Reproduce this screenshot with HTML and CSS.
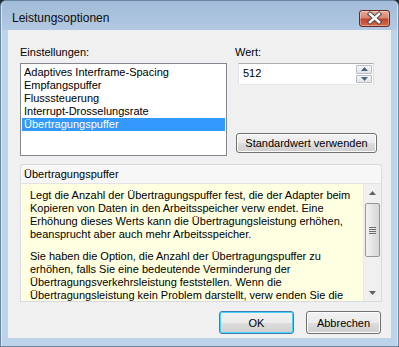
FILE: index.html
```html
<!DOCTYPE html>
<html>
<head>
<meta charset="utf-8">
<title>Leistungsoptionen</title>
<link rel="stylesheet" href="styles.css">
</head>
<body>
<div class="window">
  <div class="titlebar">
    <span class="title">Leistungsoptionen</span>
    <span class="close">
      <svg width="31" height="17" viewBox="0 0 31 17">
        <path d="M11 4 L20 12 M20 4 L11 12" stroke="#4a4a4a" stroke-width="4.4" stroke-linecap="square" fill="none"/>
        <path d="M11 4 L20 12 M20 4 L11 12" stroke="#ffffff" stroke-width="2.4" stroke-linecap="square" fill="none"/>
      </svg>
    </span>
  </div>

  <div class="client">
    <div class="settings">
      <div class="col-list">
        <div class="label">Einstellungen:</div>
        <ul class="listbox">
          <li>Adaptives Interframe-Spacing</li>
          <li>Empfangspuffer</li>
          <li>Flusssteuerung</li>
          <li>Interrupt-Drosselungsrate</li>
          <li class="selected">Übertragungspuffer</li>
        </ul>
      </div>
      <div class="col-value">
        <div class="label">Wert:</div>
        <div class="spin">
          <span class="spin-text">512</span>
          <span class="spin-buttons">
            <span class="spin-btn"><svg width="7" height="4" viewBox="0 0 7 4"><path d="M0 4 L3.5 0 L7 4 Z" fill="#4d6185"/></svg></span>
            <span class="spin-btn"><svg width="7" height="4" viewBox="0 0 7 4"><path d="M0 0 L3.5 4 L7 0 Z" fill="#4d6185"/></svg></span>
          </span>
        </div>
        <button class="btn btn-default-value">Standardwert verwenden</button>
      </div>
    </div>

    <div class="group">
      <div class="group-head">Übertragungspuffer</div>
      <div class="group-body">
        <div class="desc">
          <p>Legt die Anzahl der Übertragungspuffer fest, die der Adapter beim<br>
          Kopieren von Daten in den Arbeitsspeicher verw endet. Eine<br>
          Erhöhung dieses Werts kann die Übertragungsleistung erhöhen,<br>
          beansprucht aber auch mehr Arbeitsspeicher.</p>
          <p>Sie haben die Option, die Anzahl der Übertragungspuffer zu<br>
          erhöhen, falls Sie eine bedeutende Verminderung der<br>
          Übertragungsverkehrsleistung feststellen. Wenn die<br>
          Übertragungsleistung kein Problem darstellt, verw enden Sie die<br>
          Standardeinstellung.</p>
        </div>
        <div class="scrollbar">
          <span class="sb-arrow"><svg width="7" height="4" viewBox="0 0 7 4"><path d="M0 4 L3.5 0 L7 4 Z" fill="#606060"/></svg></span>
          <span class="sb-track">
            <span class="sb-thumb"><span class="grip"></span></span>
          </span>
          <span class="sb-arrow"><svg width="7" height="4" viewBox="0 0 7 4"><path d="M0 0 L3.5 4 L7 0 Z" fill="#606060"/></svg></span>
        </div>
      </div>
    </div>

    <div class="actions">
      <button class="btn btn-ok">OK</button>
      <button class="btn btn-cancel">Abbrechen</button>
    </div>
  </div>
</div>
</body>
</html>
```

FILE: styles.css
```css
/* Dialog "Leistungsoptionen", Windows 7 basic look
*/

body
{ margin: 0;
background: #1f2d36;
font-family: "Liberation Sans", Arial, sans-serif;
font-size: 11px;
color: #000;
}

div.window
{ width: 399px;
height: 347px;
box-sizing: border-box;
display: flex;
flex-direction: column;
padding: 0 7px 8px 7px;
border: 1px solid #6c87a4;
border-radius: 6px 6px 0 0;
background: linear-gradient(#a3bcd7 0, #b1c9e2 29px, #bcd3ea 29px);
box-shadow: inset 1px 0 #d9e6f3, inset -1px 0 #d9e6f3;
}

/* Title bar */

div.titlebar
{ height: 29px;
display: flex;
align-items: flex-start;
justify-content: space-between;
}

span.title
{ margin: 10px 0 0 4px;
font-size: 12px;
line-height: 15px;
color: #0c0c0c;
}

span.close
{ width: 31px;
height: 17px;
margin: 9px 1px 0 0;
box-sizing: border-box;
border: 1px solid #652a24;
border-radius: 3px;
background: linear-gradient(#e9a99a 0, #d98670 45%, #c3442c 55%, #d46a4c 100%);
box-shadow: inset 0 0 0 1px rgba(255,255,255,0.35);
display: flex;
align-items: center;
justify-content: center;
}

span.close svg
{ margin: -1px;
}

/* Client area */

div.client
{ flex: 1;
background: #f0f0f0;
padding: 16px 9px 0 12px;
display: flex;
flex-direction: column;
}

div.label
{ height: 13px;
line-height: 13px;
margin-bottom: 4px;
}

div.settings
{ display: flex;
gap: 8px;
}

div.col-list
{ width: 207px;
}

ul.listbox
{ margin: 0;
padding: 2px 1px;
list-style: none;
height: 93px;
box-sizing: border-box;
border: 1px solid #828790;
background: #fff;
}

ul.listbox li
{ height: 13px;
line-height: 13px;
padding-left: 2px;
white-space: nowrap;
}

ul.listbox li.selected
{ background: #3399ff;
color: #fff;
}

div.col-value
{ width: 142px;
display: flex;
flex-direction: column;
}

div.spin
{ width: 136px;
height: 22px;
margin-left: 3px;
box-sizing: border-box;
border: 1px solid #abadb3;
border-color: #abadb3 #dbdfe6 #e3e9ef #e2e3ea;
background: #fff;
display: flex;
justify-content: space-between;
}

span.spin-text
{ padding: 3px 0 0 4px;
line-height: 13px;
}

span.spin-buttons
{ width: 16px;
display: flex;
flex-direction: column;
gap: 1px;
padding: 1px 1px 1px 0;
}

span.spin-btn
{ flex: 1;
box-sizing: border-box;
border: 1px solid #b6bcc6;
border-radius: 1px;
background: linear-gradient(#f7f7f7, #e4e4e4);
display: flex;
align-items: center;
justify-content: center;
}

/* Buttons */

button.btn
{ font: inherit;
color: #000;
height: 23px;
padding: 0;
box-sizing: border-box;
border: 1px solid #707070;
border-radius: 3px;
background: linear-gradient(#f2f2f2 0, #ebebeb 50%, #dddddd 50%, #cfcfcf 100%);
box-shadow: inset 0 0 0 1px #fcfcfc;
}

button.btn-default-value
{ width: 141px;
height: 20px;
margin: 48px 0 0 1px;
}

/* Description group */

div.group
{ width: 362px;
margin-top: 8px;
}

div.group-head
{ height: 19px;
box-sizing: border-box;
border: 1px solid #d5dbe1;
border-bottom: none;
border-radius: 3px 3px 0 0;
background: #f7f7f7;
padding-left: 3px;
line-height: 19px;
}

div.group-body
{ height: 119px;
box-sizing: border-box;
border: 1px solid #d5dbe1;
border-top: 1px solid #e3e3e3;
background: #ffffe1;
display: flex;
overflow: hidden;
}

div.desc
{ flex: 1;
padding: 5px 0 0 9px;
font-family: "Liberation Sans", Arial, sans-serif;
font-size: 11px;
line-height: 13px;
white-space: nowrap;
overflow: hidden;
}

div.desc p
{ margin: 0 0 9px 0;
}

div.scrollbar
{ width: 17px;
background: #f0f0f0;
border-left: 1px solid #e8e8e8;
display: flex;
flex-direction: column;
}

span.sb-arrow
{ height: 17px;
display: flex;
align-items: center;
justify-content: center;
}

span.sb-track
{ flex: 1;
padding-top: 2px;
}

span.sb-thumb
{ display: flex;
align-items: center;
justify-content: center;
height: 54px;
margin: 0 1px;
box-sizing: border-box;
border: 1px solid #979797;
border-radius: 2px;
background: linear-gradient(90deg, #f2f2f2, #e4e4e4 50%, #d6d6d6);
}

span.grip
{ width: 7px;
height: 7px;
background: linear-gradient(#6e6e6e 1px, transparent 1px) 0 0 / 7px 2px;
}

/* Bottom row */

div.actions
{ display: flex;
justify-content: flex-end;
gap: 12px;
margin: 9px 0 0 0;
padding-right: 1px;
}

button.btn-ok
{ width: 75px;
border-color: #3c7fb1;
box-shadow: inset 0 0 0 1px #48d3fd;
}

button.btn-cancel
{ width: 75px;
}
```
